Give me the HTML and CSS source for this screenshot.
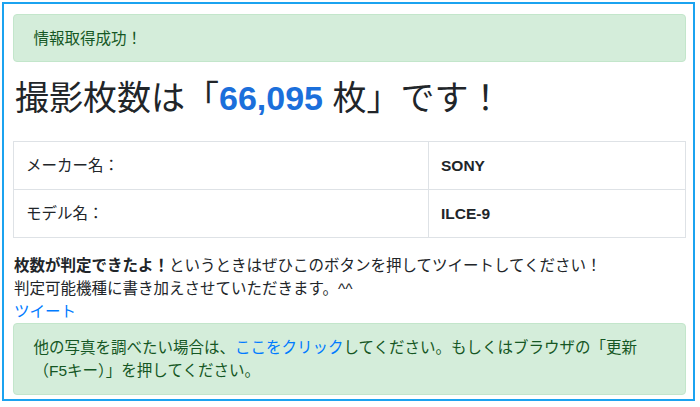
FILE: index.html
```html
<!DOCTYPE html>
<html lang="ja">
<head>
  <meta charset="UTF-8">
  <meta name="viewport" content="width=device-width, initial-scale=1.0">
  <title>撮影枚数チェッカー</title>
  <link rel="stylesheet" href="styles.css">
</head>
<body>
  <div class="frame">
    <div class="alert alert-success">情報取得成功！</div>

    <h2 class="shots">撮影枚数は「<span class="count">66,095</span> 枚」です！</h2>

    <table class="info-table">
      <tr>
        <td class="label">メーカー名：</td>
        <td class="value">SONY</td>
      </tr>
      <tr>
        <td class="label">モデル名：</td>
        <td class="value">ILCE-9</td>
      </tr>
    </table>

    <p class="note"><strong>枚数が判定できたよ！</strong>というときはぜひこのボタンを押してツイートしてください！<br>判定可能機種に書き加えさせていただきます。^^</p>
    <a class="tweet" href="#">ツイート</a>

    <div class="alert alert-success">他の写真を調べたい場合は、<a href="#">ここをクリック</a>してください。もしくはブラウザの「更新<span class="key">（F5キー）</span>」を押してください。</div>
  </div>
</body>
</html>
```

FILE: styles.css
```css
body {
  margin: 0;
  padding: 2px;
  font-family: "Liberation Sans", "Noto Sans CJK JP", sans-serif;
  font-size: 15.5px;
  line-height: 1.5;
  color: #212529;
  background-color: #fff;
}
a {
  color: #007bff;
  text-decoration: none;
}
.frame {
  box-sizing: border-box;
  width: 693px;
  height: 399px;
  border: 2px solid #1ba3f0;
  padding: 10px 7px 6px 9px;
  overflow: hidden;
}
.alert {
  padding: 11.5px 19.5px;
  border: 1px solid #c3e6cb;
  border-radius: 4px;
  background-color: #d4edda;
  color: #155724;
}
.shots {
  margin: 15.5px 0 22px 2px;
  font-size: 34px;
  font-weight: normal;
  line-height: 1.2;
}
.count {
  color: #1b6fdb;
  font-weight: bold;
}
.info-table {
  width: 100%;
  border-collapse: collapse;
  margin-bottom: 15.5px;
}
.info-table td {
  border: 1px solid #dee2e6;
  padding: 12px;
  vertical-align: top;
}
.info-table .label {
  width: 390px;
}
.info-table .value {
  font-weight: bold;
}
.note {
  margin: 0;
  padding-left: 1px;
}
.tweet {
  display: block;
  padding-left: 1px;
}
.key {
  white-space: nowrap;
}
```
